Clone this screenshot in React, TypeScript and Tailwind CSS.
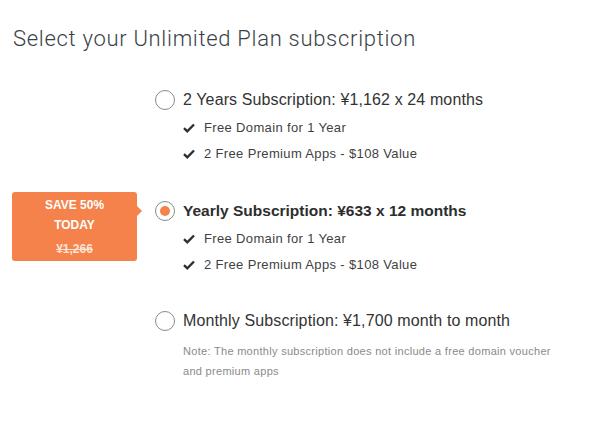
import React from "react";

const Check = () => (
  <svg width="12" height="10" viewBox="0 0 12 10" className="shrink-0">
    <path d="M1 5.2 L4.3 8.3 L11 1.5" fill="none" stroke="#2f2f2f" strokeWidth="2.4" strokeLinejoin="miter" />
  </svg>
);

const Radio = ({ selected }: { selected?: boolean }) => (
  <div className="w-[20px] h-[20px] rounded-full border border-[#8a8a8a] bg-white flex items-center justify-center shrink-0">
    {selected && <div className="w-[10px] h-[10px] rounded-full bg-[#f4824a]" />}
  </div>
);

const Perks = () => (
  <div className="mt-[3px] text-[13px] text-[#3f3f3f] tracking-[0.35px]">
    <div className="h-[26px] flex items-center gap-[9px]">
      <Check />
      <span>Free Domain for 1 Year</span>
    </div>
    <div className="h-[26px] flex items-center gap-[9px]">
      <Check />
      <span>2 Free Premium Apps - $108 Value</span>
    </div>
  </div>
);

export default function App() {
  return (
    <div
      className="w-[610px] h-[445px] bg-white text-[#333]"
      style={{ fontFamily: '"Liberation Sans", Arial, sans-serif' }}
    >
      <div className="pt-[25px] pl-[13px]">
        <h1
          className="text-[22px] leading-[28px] text-[#3a3f47] tracking-[0.7px]"
          style={{ fontFamily: 'Roboto, "Liberation Sans", sans-serif', fontWeight: 300 }}
        >
          Select your Unlimited Plan subscription
        </h1>
      </div>

      <div className="mt-[35px] flex flex-col">
        {/* Option 1 */}
        <div className="flex">
          <div className="w-[155px] shrink-0" />
          <div className="flex gap-[8px]">
            <div className="pt-[2px]">
              <Radio />
            </div>
            <div>
              <div className="h-[24px] flex items-center text-[16px] text-[#333] tracking-[0.12px]">
                2 Years Subscription: ¥1,162 x 24 months
              </div>
              <Perks />
            </div>
          </div>
        </div>

        {/* Option 2 */}
        <div className="flex mt-[32px]">
          <div className="w-[155px] shrink-0 pl-[12px]">
            <div className="relative mt-[-7px] w-[125px] h-[69px] rounded-[3px] bg-[#f4824a] flex flex-col items-center text-white font-bold text-[12px]">
              <div className="absolute right-[-5px] top-[13px] w-0 h-0 border-y-[6px] border-y-transparent border-l-[6px] border-l-[#f4824a]" />
              <div className="mt-[3px] leading-[20px]">SAVE 50%</div>
              <div className="leading-[20px]">TODAY</div>
              <div className="mt-[4px] leading-[20px] line-through text-[#fde3d5]">¥1,266</div>
            </div>
          </div>
          <div className="flex gap-[8px]">
            <div className="pt-[2px]">
              <Radio selected />
            </div>
            <div>
              <div className="h-[24px] flex items-center text-[15.5px] font-bold text-[#2e2e2e]">
                Yearly Subscription: ¥633 x 12 months
              </div>
              <Perks />
            </div>
          </div>
        </div>

        {/* Option 3 */}
        <div className="flex mt-[31px]">
          <div className="w-[155px] shrink-0" />
          <div className="flex gap-[8px]">
            <div className="pt-[2px]">
              <Radio />
            </div>
            <div>
              <div className="h-[24px] flex items-center text-[16px] text-[#333] tracking-[0.12px]">
                Monthly Subscription: ¥1,700 month to month
              </div>
              <div className="mt-[8px] text-[11px] leading-[20px] text-[#8a8a8a] tracking-[0.3px] w-[374px]">
                Note: The monthly subscription does not include a free domain voucher and premium apps
              </div>
            </div>
          </div>
        </div>
      </div>
    </div>
  );
}
